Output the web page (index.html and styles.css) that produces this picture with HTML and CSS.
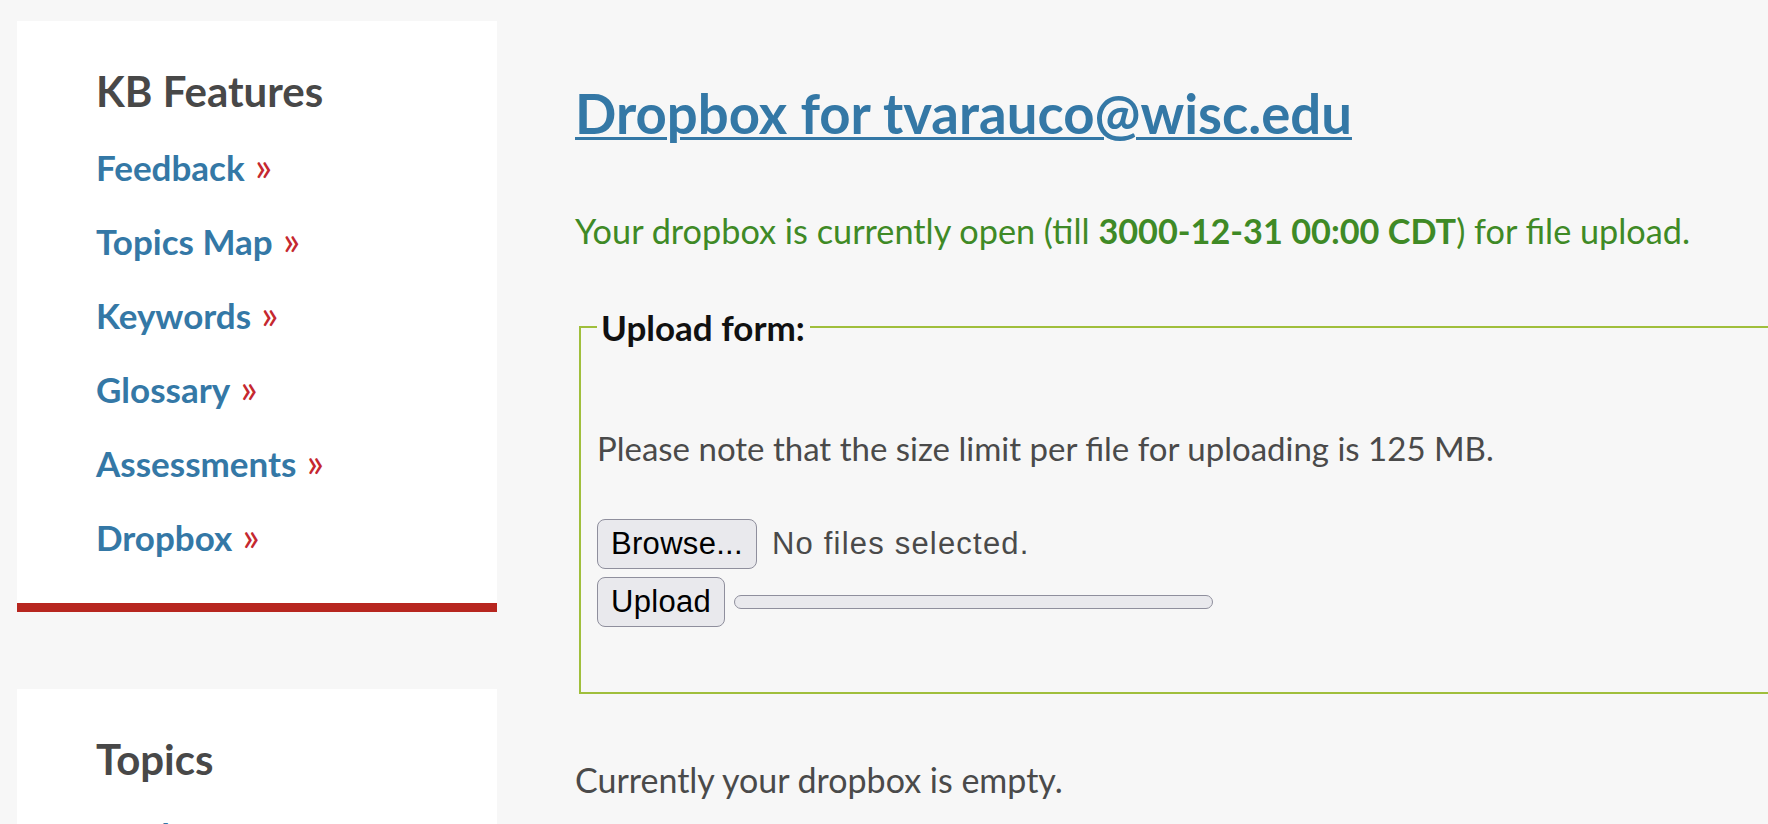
FILE: index.html
```html
<!DOCTYPE html>
<html lang="en">
<head>
<meta charset="utf-8">
<title>KB Dropbox</title>
<link rel="stylesheet" href="styles.css">
</head>
<body>
<div class="page">
  <aside class="sidebar">
    <section class="card card-red">
      <h2 class="card-title">KB Features</h2>
      <ul class="nav">
        <li><a href="#">Feedback</a></li>
        <li><a href="#">Topics Map</a></li>
        <li><a href="#">Keywords</a></li>
        <li><a href="#">Glossary</a></li>
        <li><a href="#">Assessments</a></li>
        <li><a href="#">Dropbox</a></li>
      </ul>
    </section>
    <section class="card">
      <h2 class="card-title">Topics</h2>
      <ul class="nav">
        <li><a href="#">Product News</a></li>
        <li><a href="#">Getting Started</a></li>
      </ul>
    </section>
  </aside>
  <main class="main">
    <h1 class="title"><a href="#">Dropbox for tvarauco@wisc.edu</a></h1>
    <p class="status">Your dropbox is currently open (till <strong>3000-12-31 00:00 CDT</strong>) for file upload.</p>
    <fieldset class="upload">
      <legend>Upload form:</legend>
      <p class="note">Please note that the size limit per file for uploading is 125 MB.</p>
      <div class="row">
        <button type="button" class="btn">Browse...</button>
        <span class="nofile">No files selected.</span>
      </div>
      <div class="row row-upload">
        <button type="button" class="btn">Upload</button>
        <div class="progress"></div>
      </div>
    </fieldset>
    <p class="empty">Currently your dropbox is empty.</p>
  </main>
</div>
</body>
</html>
```

FILE: styles.css
```css
html {
  overflow: hidden;
}
body {
  margin: 0;
  background: #f7f7f7;
  font-family: Lato, "Liberation Sans", sans-serif;
  color: #4a4a4a;
}
.page {
  display: flex;
  align-items: flex-start;
  gap: 78px;
  padding-left: 17px;
}
.sidebar {
  flex: 0 0 480px;
  display: flex;
  flex-direction: column;
  gap: 77px;
  padding-top: 21px;
}
.card {
  background: #ffffff;
  padding: 45px 20px 29px 79px;
}
.card-red {
  border-bottom: 9px solid #b7261f;
}
.card-title {
  margin: 0 0 14px;
  font-size: 42px;
  line-height: 50px;
  font-weight: 700;
  color: #484848;
}
.nav {
  list-style: none;
  margin: 0;
  padding: 0;
}
.nav li {
  font-size: 35px;
  line-height: 74px;
  font-weight: 700;
}
.nav a {
  color: #3478a6;
  text-decoration: none;
}
.nav a::after {
  content: "\00A0\00BB";
  color: #c5282f;
  font-weight: 400;
  font-size: 40px;
  line-height: 1;
}
.main {
  flex: 0 0 auto;
  padding-top: 81px;
}
.title {
  margin: 0;
  font-size: 54.5px;
  line-height: 64px;
  font-weight: 700;
}
.title a {
  color: #3478a6;
  text-decoration: underline;
  text-decoration-thickness: 3px;
  text-underline-offset: 3px;
}
.status {
  margin: 64px 0 0;
  font-size: 34.25px;
  line-height: 44px;
  color: #3f8a26;
}
.status strong {
  font-weight: 700;
}
.upload {
  margin: 52px 0 0 4px;
  width: 1400px;
  border: 2px solid #a0bf3c;
  padding: 0 16px 65px 16px;
}
.upload legend {
  padding: 0 5px 0 4px;
  font-size: 35px;
  line-height: 44px;
  font-weight: 700;
  color: #111111;
}
.note {
  margin: 77px 0 0;
  font-size: 33px;
  line-height: 44px;
}
.row {
  display: flex;
  align-items: center;
  margin-top: 49px;
}
.row-upload {
  margin-top: 8px;
}
.btn {
  box-sizing: border-box;
  height: 50px;
  padding: 0 13px;
  border: 1.5px solid #8f8f9d;
  border-radius: 8px;
  background: #e9e9ed;
  color: #000000;
  font-family: "Liberation Sans", Arial, sans-serif;
  font-size: 31px;
  letter-spacing: 0.3px;
}
.nofile {
  margin-left: 15px;
  font-family: "Liberation Sans", Arial, sans-serif;
  font-size: 31px;
  letter-spacing: 1.2px;
  color: #4a4a4a;
}
.progress {
  box-sizing: border-box;
  margin-left: 9px;
  width: 479px;
  height: 14px;
  border: 1.5px solid #8f8f9d;
  border-radius: 7px;
  background: #e9e9ed;
}
.empty {
  margin: 64px 0 0;
  font-size: 34px;
  line-height: 44px;
}
```
